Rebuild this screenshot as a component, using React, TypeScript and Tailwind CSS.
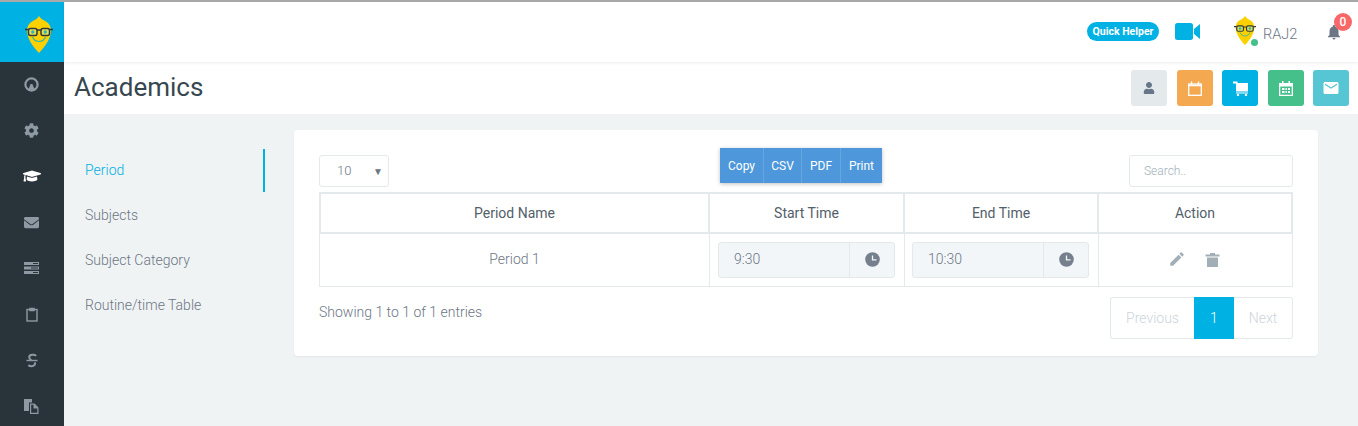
import React from 'react';
import { FaCog, FaGraduationCap, FaEnvelope, FaUser } from 'react-icons/fa';
import { MdEdit, MdNotifications, MdEmail } from 'react-icons/md';

const Logo = ({ className }: { className: string }) => (
  <svg className={className} viewBox="0 0 28 37" fill="none">
    <path d="M14 0C15.500 2.500 18 4 21 5.500C24.500 7.500 26 11 26 15C26 22 20 31 14 37C8 31 2 22 2 15C2 11 3.500 7.500 7 5.500C10 4 12.500 2.500 14 0Z" fill="#fdd000" />
    <path d="M7.500 21C10 27 18 27 20.500 21" stroke="#3fb8a0" strokeWidth="1.200" />
    <rect x="3.500" y="12.500" width="8.500" height="7" rx="2" fill="#e9e04a" stroke="#2f3a40" strokeWidth="1.500" />
    <rect x="16" y="12.500" width="8.500" height="7" rx="2" fill="#e9e04a" stroke="#2f3a40" strokeWidth="1.500" />
    <circle cx="7.750" cy="16" r="1.700" fill="#2fb5c0" />
    <circle cx="20.250" cy="16" r="1.700" fill="#2fb5c0" />
    <path d="M0 13.500H3.500M12 14H16M24.500 13.500H28" stroke="#2f3a40" strokeWidth="1.500" />
  </svg>
);

const Gauge = () => (
  <svg className="w-[15px] h-[15px]" viewBox="0 0 16 16" fill="none">
    <circle cx="8" cy="8" r="6.500" stroke="#8d99a3" strokeWidth="2.400" />
    <path d="M4 15L7 7.500H9L12 15Z" fill="#8d99a3" />
  </svg>
);

const Rows = () => (
  <svg className="w-[15px] h-[12px]" viewBox="0 0 15 12" fill="#8d99a3">
    <path d="M0 0H15V3H0ZM0 4.500H15V7.500H0ZM0 9H15V12H0Z" />
    <path d="M9 1H14V2H9ZM7 5.500H14V6.500H7ZM9 10H14V11H9Z" fill="#28333a" />
  </svg>
);

const Clip = () => (
  <svg className="w-[12px] h-[15px]" viewBox="0 0 12 15" fill="none" stroke="#8d99a3" strokeWidth="1.400">
    <rect x="1" y="2.500" width="10" height="11.500" />
    <path d="M4 1.500H8V3.500H4Z" fill="#8d99a3" />
  </svg>
);

const Strike = () => (
  <svg className="w-[12px] h-[15px]" viewBox="0 0 13 15" fill="none" stroke="#8d99a3" strokeWidth="2.200">
    <path d="M11 2.500C9.500 1 3.500 0.500 3.500 4C3.500 5.500 4.500 6.500 6 7.500" />
    <path d="M0.500 7.500H12.500" strokeWidth="1.600" />
    <path d="M9.500 9.500C10.500 11.500 9 13.700 6 13.700C4.500 13.700 3.500 13.300 2.500 12.500" />
  </svg>
);

const Files = () => (
  <svg className="w-[15px] h-[15px]" viewBox="0 0 15 15" fill="#8d99a3">
    <path d="M0 0H8V3.500H5V12H0Z" />
    <path d="M6 4.500H10.500L14.500 8.500V15H6ZM7.200 5.700V13.800H13.300V9.500H9.500V5.700Z" fillRule="evenodd" />
  </svg>
);

const Clock = () => (
  <svg className="w-[15px] h-[15px]" viewBox="0 0 15 15">
    <circle cx="7.500" cy="7.500" r="7.300" fill="#76808c" />
    <path d="M7.500 3.500V7.800H11.500" stroke="#f3f6f9" strokeWidth="1.300" fill="none" />
  </svg>
);

const Camera = () => (
  <svg className="w-[25px] h-[17px]" viewBox="0 0 25 17" fill="#00b1e3">
    <rect x="0" y="0" width="18" height="17" rx="2.500" />
    <path d="M19 6L25 1V16L19 11Z" />
  </svg>
);

const Cart = () => (
  <svg className="w-[15px] h-[15px]" viewBox="0 0 15 15" fill="#fff">
    <path d="M0 0.500H4.500V2H15V10.500H3V2.500H0Z" />
    <path d="M3 11.500H15V12.500H3Z" />
    <circle cx="5" cy="14" r="1.200" />
    <circle cx="13" cy="14" r="1.200" />
  </svg>
);

const Trash = () => (
  <svg className="w-[15px] h-[15px]" viewBox="0 0 15 15" fill="#a3afb7">
    <path d="M0.500 2.500H5V1H10V2.500H14.500V4.500H0.500Z" />
    <path d="M2 5.500H13V15H2Z" />
  </svg>
);

const CalendarOutline = () => (
  <svg className="w-[14px] h-[15px]" viewBox="0 0 14 15" fill="none" stroke="#fff" strokeWidth="1.300">
    <rect x="0.700" y="3" width="12.600" height="11.300" />
    <path d="M3.500 0.500V4M10.500 0.500V4M0.700 4.500H13.300" />
  </svg>
);

const CalendarGrid = () => (
  <svg className="w-[14px] h-[15px]" viewBox="0 0 14 15" fill="#fff">
    <path d="M0 2H14V15H0ZM1.300 5.500V13.700H12.700V5.500Z" fillRule="evenodd" />
    <path d="M3 0H4.500V3H3ZM9.500 0H11V3H9.500ZM3 7H5.500V9H3ZM6.500 7H8V9H6.500ZM9 7H11V9H9ZM3 10H5.500V12H3ZM6.500 10H8V12H6.500ZM9 10H11V12H9Z" />
  </svg>
);

const sideIcons = [
  { key: 'gauge', icon: <Gauge /> },
  { key: 'cog', icon: <FaCog className="text-[15px] text-[#8d99a3]" /> },
  { key: 'cap', icon: <FaGraduationCap className="text-[18px] text-white" /> },
  { key: 'mail', icon: <FaEnvelope className="text-[15px] text-[#8d99a3]" /> },
  { key: 'rows', icon: <Rows /> },
  { key: 'clip', icon: <Clip /> },
  { key: 'strike', icon: <Strike /> },
  { key: 'files', icon: <Files /> },
];

const TimeField = ({ value }: { value: string }) => (
  <div className="flex h-[36px] rounded-[3px] border border-[#e4e9ec] bg-[#f3f6f9] text-[14px] font-light text-[#6c7684]">
    <div className="flex-1 flex items-center pl-[15px] pb-[2px]">{value}</div>
    <div className="w-[45px] flex items-center justify-center pb-[2px] border-l border-[#e4e9ec]">
      <Clock />
    </div>
  </div>
);

export default function App() {
  return (
    <div className="h-[426px] overflow-hidden bg-[#f0f3f4] font-['Roboto',sans-serif]">
      <div className="h-[2px] bg-[#a9a9a9]" />
      <div className="flex h-[424px]">
        {/* Sidebar */}
        <aside className="w-[64px] shrink-0 bg-[#28333a]">
          <div className="h-[60px] bg-[#00b1e3] flex items-start justify-center pl-[14px] pt-[14px]">
            <Logo className="w-[28px] h-[37px]" />
          </div>
          <ul className="-mt-[1px]">
            {sideIcons.map((item) => (
              <li key={item.key} className="h-[46px] flex items-center justify-center pr-[1px]">
                {item.icon}
              </li>
            ))}
          </ul>
        </aside>

        <div className="flex-1 min-w-0">
          {/* Top bar */}
          <header className="relative z-10 h-[60px] bg-white shadow-[0_1px_3px_rgba(0,0,0,0.08)] flex items-center justify-end">
            <span className="w-[72px] h-[19px] rounded-full bg-[#00b1e3] text-white text-[10.500px] font-bold flex items-center justify-center mr-[16px] -mt-[1px]">
              Quick Helper
            </span>
            <span className="mr-[34px] -mt-[1px]"><Camera /></span>
            <div className="relative mr-[7px] mt-[-4px]">
              <Logo className="w-[22px] h-[29px]" />
              <span className="absolute right-[-2px] bottom-[-1px] w-[7px] h-[7px] rounded-full bg-[#46c08a]" />
            </div>
            <span className="w-[34px] whitespace-nowrap text-[14.500px] font-light text-[#6c7684] mr-[28px] mt-[5px]">RAJ2</span>
            <div className="relative mr-[15px] mt-[-1px]">
              <MdNotifications className="text-[18px] text-[#6c7684]" />
              <span className="absolute top-[-10px] left-[9px] w-[18px] h-[18px] rounded-full bg-[#f96868] text-white text-[12px] font-medium flex items-center justify-center">
                0
              </span>
            </div>
          </header>

          {/* Title bar */}
          <div className="h-[52px] bg-white flex items-center justify-between pl-[10px] pr-[9px]">
            <h1 className="text-[26px] font-normal text-[#37474f] -mt-[2px]">Academics</h1>
            <div className="flex gap-[9px]">
              <span className="w-[36px] h-[36px] rounded-[3px] bg-[#e4e9ec] flex items-center justify-center">
                <FaUser className="text-[12px] text-[#68768a]" />
              </span>
              <span className="w-[36px] h-[36px] ml-[1px] rounded-[3px] bg-[#f4a951] flex items-center justify-center">
                <CalendarOutline />
              </span>
              <span className="w-[36px] h-[36px] rounded-[3px] bg-[#00b1e3] flex items-center justify-center">
                <Cart />
              </span>
              <span className="w-[36px] h-[36px] ml-[1px] rounded-[3px] bg-[#46c08a] flex items-center justify-center">
                <CalendarGrid />
              </span>
              <span className="w-[36px] h-[36px] rounded-[3px] bg-[#57c6d4] flex items-center justify-center">
                <MdEmail className="text-[18px] text-white" />
              </span>
            </div>
          </div>

          {/* Content */}
          <div className="flex items-start pt-[16px]">
            <nav className="w-[201px] shrink-0 mt-[19px] mr-[29px]">
              <ul className="text-[14px] font-light text-[#6c7684]">
                <li className="h-[43px] pl-[21px] flex items-center text-[#00b1e3] border-r-2 border-[#00b1e3]">Period</li>
                <li className="h-[45px] mt-[1px] pl-[21px] flex items-center">Subjects</li>
                <li className="h-[45px] pl-[21px] flex items-center">Subject Category</li>
                <li className="h-[45px] pl-[21px] flex items-center">Routine/time Table</li>
              </ul>
            </nav>

            <main className="w-[1024px] h-[226px] bg-white rounded-[4px] shadow-[0_1px_2px_rgba(0,0,0,0.05)] px-[25px] pt-[18px]">
              <div className="relative h-[44px]">
                <div className="absolute left-0 top-[7px] w-[70px] h-[32px] rounded-[3px] border border-[#e4e9ec] flex items-center justify-between pl-[17px] pr-[5px] text-[13px] font-light text-[#6c7684]">
                  10
                  <span className="text-[10px] text-[#6c7684]">▼</span>
                </div>
                <div className="absolute left-[401px] top-0 flex h-[35px] bg-[#4d97da] shadow-[0_1px_4px_rgba(0,0,0,0.25)] text-white text-[12px]">
                  <span className="w-[44px] flex items-center justify-center border-r border-[#66a6e0]">Copy</span>
                  <span className="w-[38px] flex items-center justify-center border-r border-[#66a6e0]">CSV</span>
                  <span className="w-[39px] flex items-center justify-center border-r border-[#66a6e0]">PDF</span>
                  <span className="w-[41px] flex items-center justify-center">Print</span>
                </div>
                <div className="absolute right-0 top-[7px] w-[164px] h-[32px] rounded-[3px] border border-[#e4e9ec] flex items-center pl-[14px] text-[12px] font-light text-[#a3afb7]">
                  Search..
                </div>
              </div>

              <table className="w-[974px] table-fixed border-separate border-spacing-0 text-[14px]">
                <colgroup>
                  <col className="w-[391px]" />
                  <col className="w-[195px]" />
                  <col className="w-[194px]" />
                  <col className="w-[194px]" />
                </colgroup>
                <thead>
                  <tr className="h-[42px] text-[#526069]">
                    <th className="font-normal border-2 border-[#e4e9ec]">Period Name</th>
                    <th className="font-normal border-2 border-l-0 border-[#e4e9ec]">Start Time</th>
                    <th className="font-normal border-2 border-l-0 border-[#e4e9ec]">End Time</th>
                    <th className="font-normal border-2 border-l-0 border-[#e4e9ec]">Action</th>
                  </tr>
                </thead>
                <tbody>
                  <tr className="h-[53px] font-light text-[#6c7684]">
                    <td className="border border-t-0 border-[#e4e9ec] text-center pb-[2px]">Period 1</td>
                    <td className="border-r border-b border-[#e4e9ec] pl-[8px] pr-[9px]"><TimeField value="9:30" /></td>
                    <td className="border-r border-b border-[#e4e9ec] pl-[7px] pr-[9px]"><TimeField value="10:30" /></td>
                    <td className="border-r border-b border-[#e4e9ec] pb-[2px]">
                      <div className="flex items-center justify-center gap-[19px] pr-[3px] text-[#a3afb7]">
                        <MdEdit className="text-[18px]" />
                        <Trash />
                      </div>
                    </td>
                  </tr>
                </tbody>
              </table>

              <div className="flex justify-between items-start mt-[10px]">
                <span className="mt-[5px] text-[14px] font-light text-[#6c7684]">Showing 1 to 1 of 1 entries</span>
                <div className="flex h-[42px] text-[14px] font-light">
                  <span className="w-[84px] flex items-center justify-center rounded-l-[3px] border border-r-0 border-[#e4e9ec] text-[#ccd5db]">Previous</span>
                  <span className="w-[40px] flex items-center justify-center bg-[#00b1e3] text-white">1</span>
                  <span className="w-[59px] flex items-center justify-center rounded-r-[3px] border border-l-0 border-[#e4e9ec] text-[#ccd5db]">Next</span>
                </div>
              </div>
            </main>
          </div>
        </div>
      </div>
    </div>
  );
}
